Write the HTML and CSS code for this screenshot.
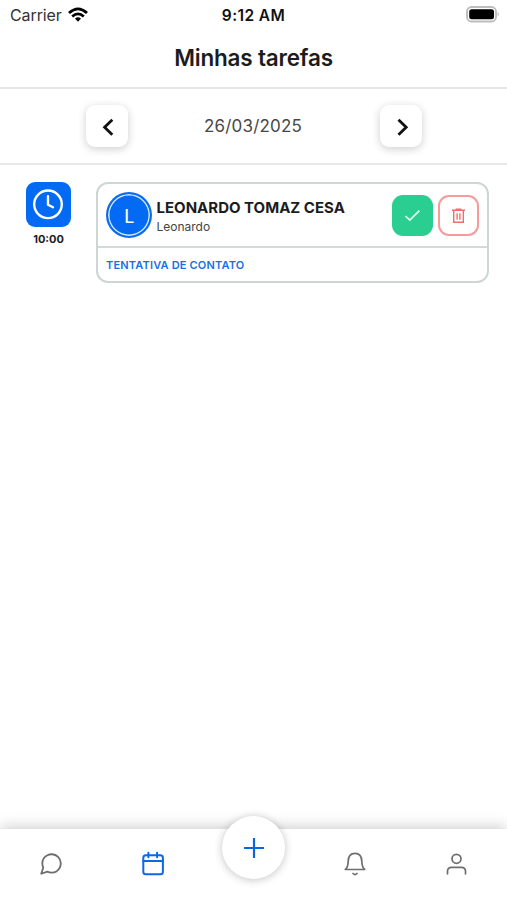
FILE: index.html
```html
<!DOCTYPE html>
<html lang="pt-BR">
<head>
<meta charset="utf-8">
<title>Minhas tarefas</title>
<link rel="stylesheet" href="styles.css">
</head>
<body>
<div class="status">
  <div class="carrier"><span>Carrier</span>
    <svg width="20" height="16" viewBox="0 0 20 16" fill="none" stroke="#000" stroke-width="2.8"><path d="M1 6Q10-2.2 19 6"/><path d="M4.2 9.6Q10 4.2 15.8 9.6"/><path d="M7 11.5Q10 9 13 11.5L10 14.8z" fill="#000" stroke="none"/></svg>
  </div>
  <span class="clock">9:12 AM</span>
  <svg class="battery" width="34" height="17" viewBox="0 0 34 17"><rect x="1" y="1" width="29" height="14.500" rx="4.500" fill="#fff" stroke="#bdbdbd" stroke-width="1.900"/><rect x="3.200" y="3.200" width="24.800" height="10" rx="2.500"/><path d="M31.700 6q2 2.200 0 4.400z" fill="#aaa"/></svg>
</div>
<header class="header"><h1>Minhas tarefas</h1></header>
<div class="datebar">
  <button class="arrow" aria-label="Anterior"><svg width="42" height="42" viewBox="0 0 42 42" fill="none" stroke="#111" stroke-width="2.800"><path d="M26.300 14.700L18.600 22.200L26.300 29.700"/></svg></button>
  <span class="date">26/03/2025</span>
  <button class="arrow" aria-label="Próximo"><svg width="42" height="42" viewBox="0 0 42 42" fill="none" stroke="#111" stroke-width="2.800"><path d="M18.500 14.700L26.200 22.200L18.500 29.700"/></svg></button>
</div>
<main class="tasks">
  <div class="time">
    <div class="timeicon"><svg width="45" height="45" viewBox="0 0 45 45" fill="none" stroke="#fff" stroke-width="2.400" stroke-linecap="round" stroke-linejoin="round"><circle cx="22" cy="22.300" r="13.800"/><path d="M22 14.200V22.800L27 25.300"/></svg></div>
    <span class="hour">10:00</span>
  </div>
  <article class="card">
    <div class="top">
      <div class="avatar"><span>L</span></div>
      <div class="who"><strong class="name">LEONARDO TOMAZ CESA</strong><span class="sub">Leonardo</span></div>
      <button class="action done" aria-label="Concluir"><svg width="41" height="41" viewBox="0 0 41 41" fill="none" stroke="#e4fff4" stroke-width="1.700"><path d="M13.500 21L17.800 25L27.400 15.700"/></svg></button>
      <button class="action remove" aria-label="Excluir"><svg width="37" height="37" viewBox="1 1 37 37" fill="none" stroke="#f46b6b" stroke-width="1.400"><path d="M13 14.300H26M16.600 13.300H22.400M14.700 14.600V26.200H24.300V14.600M18.100 17.300V23.700M20.900 17.300V23.700"/></svg></button>
    </div>
    <div class="kind"><span>TENTATIVA DE CONTATO</span></div>
  </article>
</main>
<nav class="nav">
  <a class="tab"><svg width="26" height="26" viewBox="0 0 24 24"><path d="M21 11.500a8.380 8.380 0 0 1-.9 3.800 8.500 8.500 0 0 1-7.600 4.700 8.380 8.380 0 0 1-3.800-.9L3 21l1.900-5.700a8.380 8.380 0 0 1-.9-3.800 8.500 8.500 0 0 1 4.700-7.600 8.380 8.380 0 0 1 3.800-.9h.5a8.480 8.480 0 0 1 8 8v.5z"/></svg></a>
  <a class="tab active"><svg width="26" height="26" viewBox="0 0 26 26"><rect x="3.300" y="4.300" width="19.600" height="19" rx="2.500"/><path d="M3.300 10H22.900M8.400 1.700V6.200M17.100 1.700V6.200"/></svg></a>
  <div class="slot"><button class="fab" aria-label="Adicionar"><svg width="24" height="24" viewBox="0 0 24 24"><path d="M12 2V22M2 12H22"/></svg></button></div>
  <a class="tab"><svg width="26" height="26" viewBox="0 0 26 26"><path d="M3.300 18.500H22.700C20.500 16.800 20 15 19.800 10.500C19.700 5.400 17.300 2.400 13 2.400S6.300 5.400 6.200 10.500C6 15 5.500 16.800 3.300 18.500zM11 22.500Q13 24.500 15 22.500"/></svg></a>
  <a class="tab"><svg width="26" height="26" viewBox="0 0 26 26"><circle cx="12.500" cy="7.800" r="4.500"/><path d="M3.500 22.800V20.200Q3.500 16.300 7.700 16.300H17.300Q21.500 16.300 21.500 20.200V22.800"/></svg></a>
</nav>
</body>
</html>
```
FILE: styles.css
```css
* { box-sizing: border-box; }
body {
  margin: 0;
  height: 900px;
  display: flex;
  flex-direction: column;
  background: #fff;
  color: #1c1c1e;
  font-family: Inter, sans-serif;
  overflow: hidden;
}
button { padding: 0; border: 0; background: #fff; font: inherit; }
svg { display: block; flex: none; }
span, strong, h1 { white-space: nowrap; }
.status {
  height: 30px;
  display: grid;
  grid-template-columns: 1fr auto 1fr;
  align-items: center;
  padding: 0 7px 0 10px;
}
.carrier { display: flex; align-items: center; gap: 6px; font-size: 16px; color: #333; letter-spacing: -0.1px; }
.carrier svg { margin-top: -1px; }
.clock { margin-right: 3px; font-size: 15.500px; font-weight: 600; letter-spacing: .4px; color: #111; }
.battery { justify-self: end; margin-top: -1px; }
.header { height: 59px; border-bottom: 2px solid #e4e4e4; display: flex; justify-content: center; }
h1 { margin: 14px 0 0; font-size: 22.500px; line-height: 28px; font-weight: 600; letter-spacing: -.2px; }
.datebar {
  height: 76px;
  border-bottom: 2px solid #e8e8e8;
  display: flex;
  align-items: center;
  justify-content: space-between;
  padding: 0 85px 1px 86px;
}
.arrow { width: 42px; height: 42px; border-radius: 9px; box-shadow: 0 2px 8px rgba(0, 0, 0, .2); }
.date { margin: 1px 2px 0 0; font-size: 17px; letter-spacing: .2px; color: #484848; }
.tasks { flex: 1; display: flex; align-items: flex-start; padding: 17px 18px 0 26px; }
.time { width: 45px; margin-right: 25px; display: flex; flex-direction: column; align-items: center; }
.timeicon { width: 45px; height: 45px; border-radius: 9px; background: #036bf3; }
.hour { margin-top: 4px; font-size: 11px; line-height: 16px; font-weight: 700; }
.card { flex: 1; height: 101px; border: 2px solid #cdd5d5; border-radius: 12px; }
.top { height: 64px; display: flex; align-items: center; padding: 0 8px; border-bottom: 2px solid #d2dbd9; }
.avatar {
  width: 46px;
  height: 46px;
  border-radius: 50%;
  border: 2px solid #0a6df0;
  background: #036bf3;
  box-shadow: inset 0 0 0 1.500px #d7e9ff;
  color: #fff;
  font-family: Lato, sans-serif;
  font-size: 19px;
  display: flex;
  align-items: center;
  justify-content: center;
}
.who { flex: 1; display: flex; flex-direction: column; margin: 3px 0 0 4.500px; }
.name { font-size: 15px; line-height: 20px; font-weight: 700; }
.sub { font-size: 12px; line-height: 18px; color: #444; }
.action { width: 41px; height: 41px; border-radius: 11px; }
.done { background: #2bce91; }
.remove { margin-left: 5px; border: 2px solid #f79a9a; }
.kind { height: 33px; display: flex; align-items: center; padding-left: 8px; color: #196fe5; font-size: 11px; font-weight: 600; letter-spacing: .18px; }
.nav {
  height: 71px;
  display: grid;
  grid-template-columns: repeat(5, 1fr);
  background: #fff;
  box-shadow: 0 -2px 14px rgba(0, 0, 0, .2);
}
.tab { display: flex; justify-content: center; padding: 22px 0 0 1px; }
.nav svg { fill: none; stroke: #6e6e6e; stroke-width: 1.700; stroke-linecap: round; stroke-linejoin: round; }
.nav .active svg { stroke: #0b69e3; stroke-width: 2; }
.slot { display: flex; justify-content: center; padding-left: 1px; }
.fab {
  width: 63px;
  height: 63px;
  margin-top: -13px;
  border-radius: 50%;
  box-shadow: 0 1px 9px rgba(0, 0, 0, .24);
  display: flex;
  align-items: center;
  justify-content: center;
}
.nav .fab svg { stroke: #0b65dc; stroke-width: 2.200; stroke-linecap: butt; }
```
